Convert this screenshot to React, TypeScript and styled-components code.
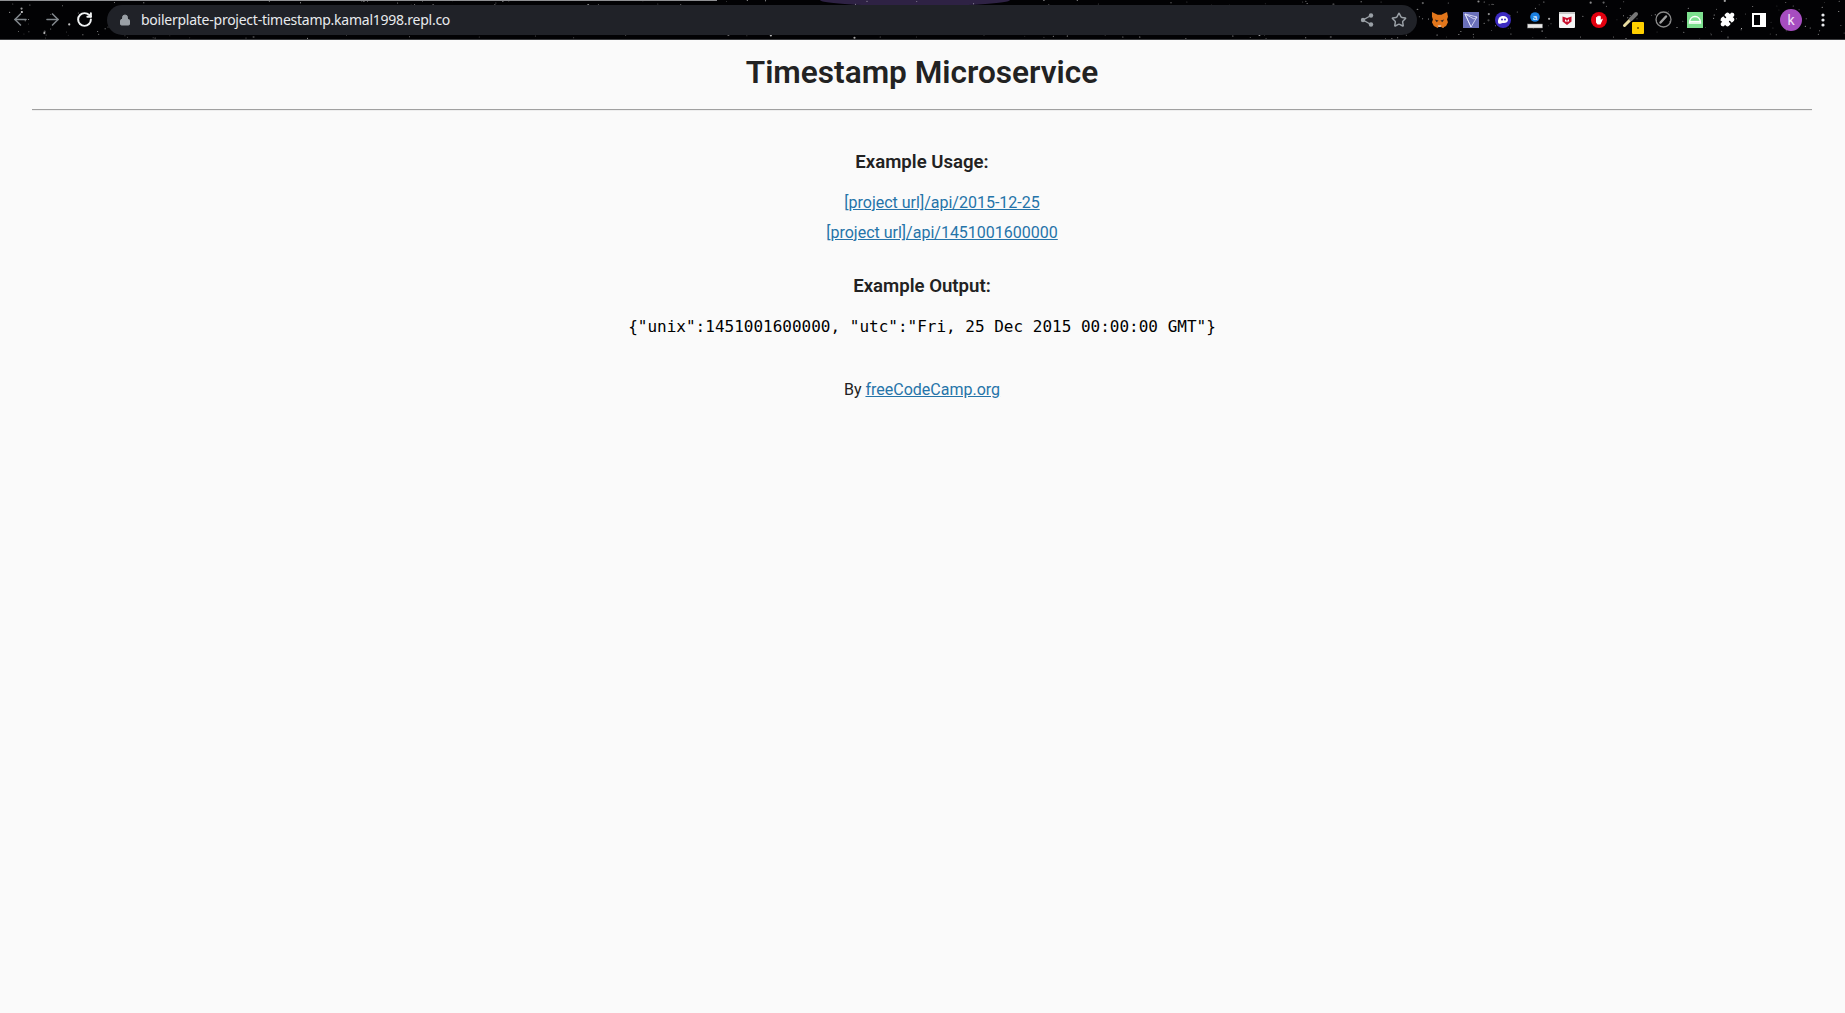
import React from "react";
import styled, {createGlobalStyle} from "styled-components";
import {ArrowLeft, ArrowRight, RotateCw, Lock, Star, Puzzle} from "lucide-react";

const GlobalStyle = createGlobalStyle`
    html, body {
        margin: 0;
        padding: 0;
        height: 100%;
        background: #fafafa;
    }
`

// seeded so the star field stays the same between renders
function makeStars(count: number) {
    let seed = 1998;
    const next = () => {
        seed = (seed * 16807) % 2147483647;
        return seed / 2147483647;
    };
    return Array.from({length: count}, () => ({
        x: next() * 1845,
        y: next() * 39,
        r: next() < 0.12 ? 1.1 : 0.5,
        o: 0.2 + next() * 0.7,
    }));
}

const stars = makeStars(520);

function App() {
    return <Page>
        <GlobalStyle/>
        <Toolbar>
            <StarField width="1845" height="39" viewBox="0 0 1845 39">
                <ellipse cx="915" cy="0" rx="95" ry="6" fill="#3a2a55" opacity="0.8"/>
                {stars.map((s, i) => <circle key={i} cx={s.x} cy={s.y} r={s.r} fill="#fff" opacity={s.o}/>)}
                <rect x="0" y="0" width="717" height="1" fill="#8e8f92"/>
            </StarField>
            <NavButton $dim><ArrowLeft size={19} strokeWidth={2}/></NavButton>
            <NavButton $dim><ArrowRight size={19} strokeWidth={2}/></NavButton>
            <NavButton><RotateCw size={17} strokeWidth={2.8}/></NavButton>
            <Omnibox>
                <LockIcon>
                    <Lock size={12} fill="#9aa0a6" strokeWidth={2}/>
                </LockIcon>
                <Url>boilerplate-project-timestamp.kamal1998.repl.co</Url>
                <OmniAction>
                    <svg width="14" height="14" viewBox="0 0 14 14">
                        <path d="M11 2.500L3 7l8 4.500" fill="none" stroke="#9aa0a6" strokeWidth="1.400"/>
                        <circle cx="11" cy="2.500" r="2.200" fill="#9aa0a6"/>
                        <circle cx="3" cy="7" r="2.200" fill="#9aa0a6"/>
                        <circle cx="11" cy="11.500" r="2.200" fill="#9aa0a6"/>
                    </svg>
                </OmniAction>
                <OmniAction><Star size={16} strokeWidth={2.2}/></OmniAction>
            </Omnibox>
            <Extensions>
                <NavButton>
                    <svg width="17" height="16" viewBox="0 0 18 17">
                        <path d="M1 0l6 3h4l6-3 1 5-1 3 1 3-2 4-4 2-1-1H8l-1 1-4-2-2-4 1-3-1-3z" fill="#e2761b"/>
                        <path d="M4 8l4 1-2 2zM14 8l-4 1 2 2z" fill="#3a2a20"/>
                        <path d="M7 14h4l-1 2H8z" fill="#d7c1b3"/>
                    </svg>
                </NavButton>
                <NavButton>
                    <svg width="16" height="16" viewBox="0 0 16 16">
                        <rect width="16" height="16" fill="#6a70bb"/>
                        <path d="M2 2l12 3-6 10zM2 2l6 13M2 2l9 5 3-2" fill="none" stroke="#e8eaff" strokeWidth="0.800"/>
                    </svg>
                </NavButton>
                <NavButton>
                    <svg width="16" height="16" viewBox="0 0 16 16">
                        <circle cx="8" cy="8" r="8" fill="#3c2bc0"/>
                        <path d="M3 10c0-4 2-6 5-6s5 2 5 4-2 3-4 3c-1 0-2 0-3 .5-1 .7-3 .5-3-1.500z" fill="#fff"/>
                        <circle cx="7" cy="7.500" r="1" fill="#3c2bc0"/>
                        <circle cx="10" cy="7.500" r="1" fill="#3c2bc0"/>
                    </svg>
                </NavButton>
                <NavButton>
                    <svg width="16" height="18" viewBox="0 0 16 18">
                        <circle cx="8" cy="6" r="4.800" fill="#1a7fe0"/>
                        <text x="8" y="9" fontSize="8" fontFamily="Liberation Sans, sans-serif" textAnchor="middle" fill="#fff">a</text>
                        <rect x="0.500" y="13" width="15" height="4" fill="#e8e8e8" stroke="#777" strokeWidth="0.500"/>
                    </svg>
                </NavButton>
                <NavButton>
                    <svg width="16" height="16" viewBox="0 0 16 16">
                        <rect width="16" height="16" rx="1" fill="#f5f5f5"/>
                        <rect width="16" height="2" fill="#c9c9c9"/>
                        <path d="M3.500 4.500L8 6l4.500-1.500v5L8 13 3.500 9.500z" fill="#c8102e"/>
                        <path d="M6 7l2 2 2-2v2.500H6z" fill="#fff"/>
                    </svg>
                </NavButton>
                <NavButton>
                    <svg width="16" height="16" viewBox="0 0 16 16">
                        <circle cx="8" cy="8" r="8" fill="#e3000f"/>
                        <path d="M5 8V5.500a.6.6 0 011.200 0V4.500a.6.6 0 011.200 0v-.5a.6.6 0 011.200 0v.5a.6.6 0 011.200 0V8l1-1c.8-.5 1.200.2.800.8L9.500 12.500H6.500L5 10.500z" fill="#fff"/>
                    </svg>
                </NavButton>
                <NavButton>
                    <svg width="32" height="32" viewBox="0 0 32 32">
                        <path d="M9.500 21.500L16 15" stroke="#e8dca0" strokeWidth="3" strokeLinecap="round"/>
                        <path d="M16 15l5-5" stroke="#777" strokeWidth="4" strokeLinecap="round"/>
                        <rect x="17" y="18" width="12" height="12" rx="1" fill="#ffd000"/>
                        <circle cx="23" cy="24" r="1" fill="#6b4e00"/>
                    </svg>
                </NavButton>
                <NavButton>
                    <svg width="17" height="17" viewBox="0 0 17 17">
                        <circle cx="8.500" cy="8.500" r="7.500" fill="none" stroke="#8a8a8a" strokeWidth="1.300"/>
                        <path d="M5.500 11.500l5.500-6" stroke="#a0a0a0" strokeWidth="2.500" strokeLinecap="round"/>
                    </svg>
                </NavButton>
                <NavButton>
                    <svg width="16" height="16" viewBox="0 0 16 16">
                        <rect width="16" height="16" fill="#7de08f"/>
                        <path d="M2.500 11c0-4 2.500-6.500 5.500-6.500s5.500 2.500 5.500 6.500z" fill="none" stroke="#fff" strokeWidth="1.400"/>
                        <path d="M2.500 9.500h11" stroke="#fff" strokeWidth="1.200"/>
                    </svg>
                </NavButton>
                <NavButton><Puzzle size={15} color="#fff" fill="#fff"/></NavButton>
                <NavButton>
                    <svg width="14" height="14" viewBox="0 0 14 14">
                        <path d="M0 0h14v14H0zM2 2v10h6V2z" fill="#fff" fillRule="evenodd"/>
                    </svg>
                </NavButton>
                <NavButton><Avatar>k</Avatar></NavButton>
                <NavButton>
                    <svg width="4" height="14" viewBox="0 0 4 14">
                        <circle cx="2" cy="2" r="1.600" fill="#e8eaed"/>
                        <circle cx="2" cy="7" r="1.600" fill="#e8eaed"/>
                        <circle cx="2" cy="12" r="1.600" fill="#e8eaed"/>
                    </svg>
                </NavButton>
            </Extensions>
        </Toolbar>
        <Content>
            <Title>Timestamp Microservice</Title>
            <Divider/>
            <Section>
                <Heading>Example Usage:</Heading>
                <LinkList>
                    <li><ExampleLink href="#">[project url]/api/2015-12-25</ExampleLink></li>
                    <li><ExampleLink href="#">[project url]/api/1451001600000</ExampleLink></li>
                </LinkList>
                <Heading>Example Output:</Heading>
                <Output>{`{"unix":1451001600000, "utc":"Fri, 25 Dec 2015 00:00:00 GMT"}`}</Output>
            </Section>
            <Footer>By <ExampleLink href="#">freeCodeCamp.org</ExampleLink></Footer>
        </Content>
    </Page>
}

export default App;

const Page = styled.div`
    min-height: 100vh;
    background: #fafafa;
    color: #222;
    font-family: Roboto, "Liberation Sans", sans-serif;
    font-size: 16px;
    text-align: center;
`
const Toolbar = styled.header`
    position: relative;
    display: flex;
    align-items: center;
    height: 39px;
    padding: 0 6px 0 4px;
    background: #020204;
    border-bottom: 1px solid #3c3d40;
`
const StarField = styled.svg`
    position: absolute;
    top: 0;
    left: 0;
`
const NavButton = styled.div<{ $dim?: boolean }>`
    position: relative;
    display: flex;
    flex: none;
    width: 32px;
    height: 32px;
    align-items: center;
    justify-content: center;
    color: ${props => (props.$dim ? "#80868b" : "#f1f3f4")};
`
const Omnibox = styled.div`
    position: relative;
    display: flex;
    flex: 1;
    height: 30px;
    margin: 0 6px 0 7px;
    padding: 0 2px 0 12px;
    align-items: center;
    border-radius: 15px;
    background: #202228;
`
const LockIcon = styled.span`
    display: flex;
    width: 22px;
    color: #9aa0a6;
`
const Url = styled.span`
    flex: 1;
    color: #e8eaed;
    font-family: "Noto Sans", sans-serif;
    font-size: 14px;
    letter-spacing: -0.25px;
    text-align: left;
`
const OmniAction = styled.span`
    display: flex;
    width: 32px;
    justify-content: center;
    color: #9aa0a6;
`
const Extensions = styled.div`
    position: relative;
    display: flex;
    align-items: center;
`
const Avatar = styled.span`
    display: flex;
    width: 22px;
    height: 22px;
    align-items: center;
    justify-content: center;
    border-radius: 50%;
    background: #a64dc0;
    color: #f3e3f7;
    font-size: 14px;
`
const Content = styled.main`
    padding: 0 33px 0 32px;
`
const Title = styled.h1`
    margin: 0;
    padding-top: 14px;
    font-size: 31.6px;
    font-weight: 600;
    line-height: 37px;
`
const Divider = styled.hr`
    margin: 18px 0 0;
    border: none;
    border-top: 1px solid #a0a0a0;
    border-bottom: 1px solid #eee;
`
const Section = styled.section`
    padding-top: 40px;
`
const Heading = styled.h3`
    margin: 0;
    font-size: 18.6px;
    font-weight: 600;
    line-height: 22px;
`
const LinkList = styled.ul`
    margin: 20px 0 33px;
    padding: 0 0 0 40px;
    list-style: none;

    li {
        line-height: 19px;
        margin-bottom: 11px;
    }
`
const ExampleLink = styled.a`
    color: #2574a9;
`
const Output = styled.code`
    display: block;
    margin-top: 20px;
    color: #000;
    font-family: "DejaVu Sans Mono", monospace;
    font-size: 16px;
    line-height: 19px;
`
const Footer = styled.p`
    margin: 44px 0 0;
    line-height: 19px;
`
